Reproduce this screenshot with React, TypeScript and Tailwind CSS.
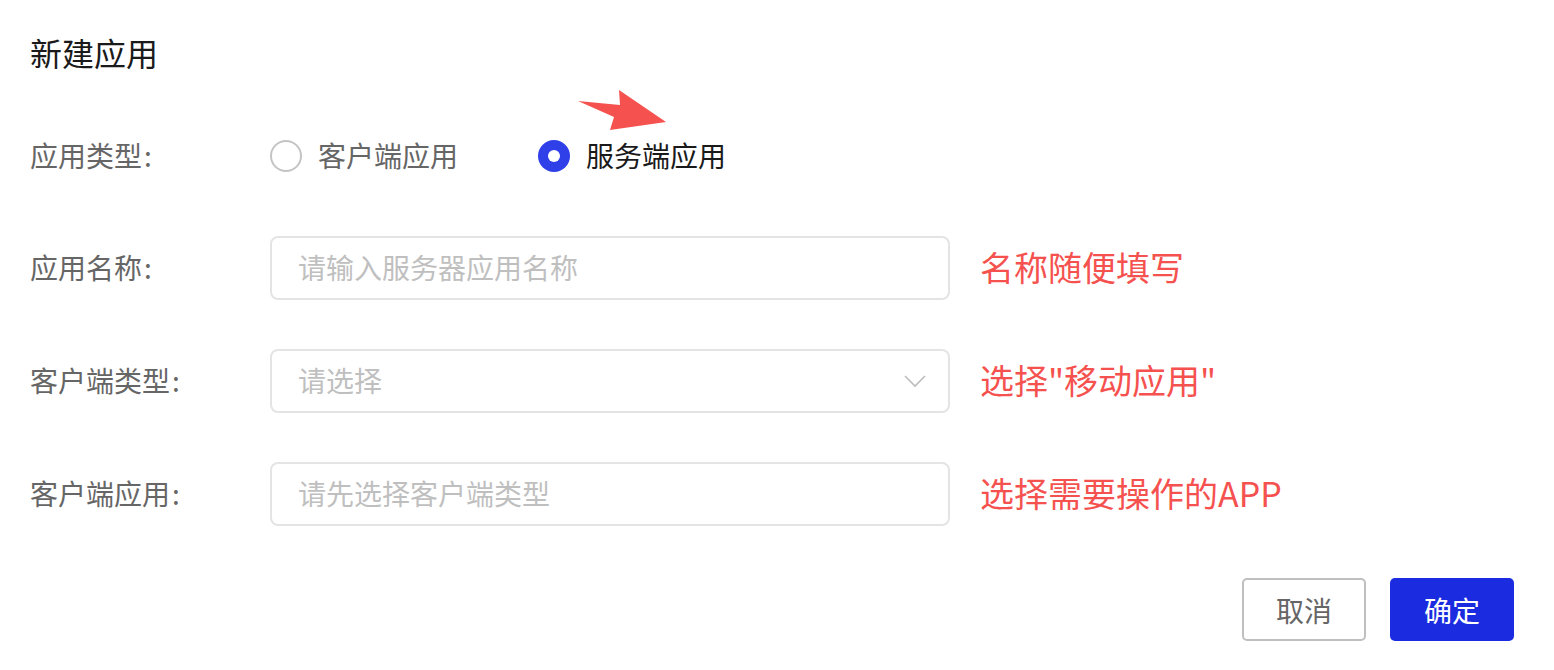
import React, { useState } from "react";

const font = { fontFamily: '"Noto Sans CJK SC", "Noto Sans", sans-serif' };

// Radio option
const Radio = ({
  label,
  checked,
  onClick,
}: {
  label: string;
  checked: boolean;
  onClick: () => void;
}) => (
  <button type="button" onClick={onClick} className="flex items-center gap-4">
    {checked ? (
      <span className="w-8 h-8 rounded-full bg-[#3040e8] flex items-center justify-center">
        <span className="w-3 h-3 rounded-full bg-white" />
      </span>
    ) : (
      <span className="w-8 h-8 rounded-full border-2 border-[#c4c4c4] bg-white" />
    )}
    <span className={`text-[28px] leading-none -mt-[3px] ${checked ? "text-[#1a1a1a]" : "text-[#666666]"}`}>
      {label}
    </span>
  </button>
);

const Label = ({ text }: { text: string }) => (
  <div className="w-[240px] shrink-0 text-[28px] leading-none text-[#666666] flex items-center -mt-[2px]">
    <span>{text}</span>
    <span className="ml-[2px]">:</span>
  </div>
);

const Note = ({ text }: { text: string }) => (
  <div className="ml-[30px] text-[34px] leading-none text-[#f5524f] -mt-[2px]">{text}</div>
);

const App = () => {
  const [type, setType] = useState<"client" | "server">("server");

  return (
    <div className="w-full min-h-[670px] bg-white flex flex-col pl-[30px] pr-10 pt-7" style={font}>
      {/* Title */}
      <h1 className="text-[32px] leading-[48px] text-[#1a1a1a]">新建应用</h1>

      {/* App type */}
      <div className="relative flex items-center h-16 mt-12">
        <Label text="应用类型" />
        <div className="flex items-center gap-[80px]">
          <Radio label="客户端应用" checked={type === "client"} onClick={() => setType("client")} />
          <Radio label="服务端应用" checked={type === "server"} onClick={() => setType("server")} />
        </div>
        {/* annotation arrow */}
        <svg
          className="absolute left-[540px] top-[-40px]"
          width="100"
          height="50"
          viewBox="540 80 100 50"
        >
          <polygon
            points="548,97 590,101 589,86 636,118 580,126 584,113"
            fill="#f5524f"
          />
        </svg>
      </div>

      {/* App name */}
      <div className="flex items-center mt-[48px]">
        <Label text="应用名称" />
        <div className="w-[680px] h-16 border-2 border-[#e4e4e4] rounded-lg flex items-center pl-[26px] pr-7">
          <span className="text-[28px] leading-none text-[#bfbfbf] -mt-[2px]">请输入服务器应用名称</span>
        </div>
        <Note text="名称随便填写" />
      </div>

      {/* Client type */}
      <div className="flex items-center mt-[49px]">
        <Label text="客户端类型" />
        <div className="w-[680px] h-16 border-2 border-[#e4e4e4] rounded-lg flex items-center justify-between pl-[26px] pr-[22px]">
          <span className="text-[28px] leading-none text-[#bfbfbf] -mt-[2px]">请选择</span>
          <svg width="22" height="14" viewBox="0 0 22 14" fill="none">
            <path d="M1 2 L11 12 L21 2" stroke="#bdbdbd" strokeWidth="1.6" />
          </svg>
        </div>
        <Note text={'选择"移动应用"'} />
      </div>

      {/* Client app */}
      <div className="flex items-center mt-[49px]">
        <Label text="客户端应用" />
        <div className="w-[680px] h-16 border-2 border-[#e4e4e4] rounded-lg flex items-center pl-[26px] pr-7">
          <span className="text-[28px] leading-none text-[#bfbfbf] -mt-[2px]">请先选择客户端类型</span>
        </div>
        <Note text="选择需要操作的APP" />
      </div>

      {/* Footer */}
      <div className="flex justify-end gap-6 mt-[52px]">
        <button className="w-[124px] h-[63px] border-2 border-[#bfbfbf] rounded-[5px] text-[28px] text-[#666666] bg-white">
          取消
        </button>
        <button className="w-[124px] h-[63px] rounded-[5px] text-[28px] text-white bg-[#1b2be0]">
          确定
        </button>
      </div>
    </div>
  );
};

export default App;
